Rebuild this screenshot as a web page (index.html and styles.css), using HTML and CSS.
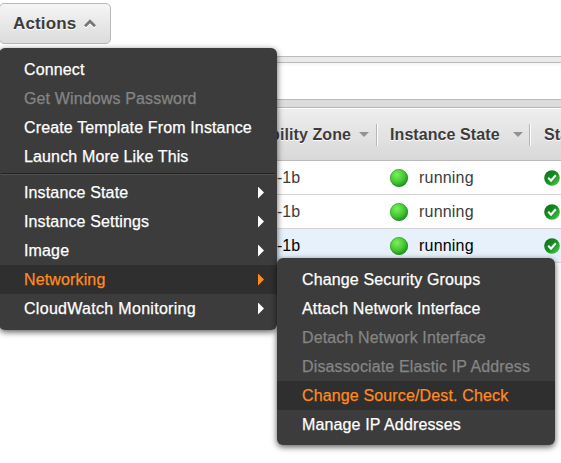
FILE: index.html
```html
<!DOCTYPE html>
<html lang="en">
<head>
<meta charset="utf-8">
<title>Instances</title>
<link rel="stylesheet" href="styles.css">
</head>
<body>
<svg class="defs" aria-hidden="true">
  <defs>
    <radialGradient id="green" cx="38%" cy="32%" r="70%">
      <stop offset="0" stop-color="#7bf05c"/><stop offset=".6" stop-color="#46c72f"/><stop offset="1" stop-color="#16911f"/>
    </radialGradient>
    <linearGradient id="dark" x1="0" y1="0" x2="1" y2="1">
      <stop offset="0" stop-color="#0b6b14"/><stop offset=".55" stop-color="#189324"/><stop offset="1" stop-color="#58d653"/>
    </linearGradient>
    <g id="dot"><circle cx="9" cy="9" r="9" fill="url(#green)"/><circle cx="9" cy="9" r="8.6" fill="none" stroke="#258d2c" stroke-opacity=".55" stroke-width=".8"/></g>
    <g id="check"><circle cx="8" cy="8" r="7.8" fill="url(#dark)"/><path d="M4.2 7.8 7 10.6 11.8 5.2" fill="none" stroke="#fff" stroke-width="2.1"/></g>
  </defs>
</svg>
<div class="toolbar">
  <button class="actions">Actions
    <svg width="14" height="10" viewBox="0 0 14 10"><path d="M2 8.6 7 3.6l5 5" fill="none" stroke="#fff" stroke-width="2.6"/><path d="M2 7.2 7 2.2l5 5" fill="none" stroke="#777" stroke-width="2.8"/></svg>
  </button>
</div>
<div class="strip"></div>
<div class="filter"></div>
<div class="gutter"></div>
<div class="table">
  <div class="row head">
    <div class="zone"><span>bility Zone</span><i class="sort"></i></div>
    <div class="state"><span>Instance State</span><i class="sort"></i></div>
    <div class="status">Sta</div>
  </div>
  <div class="row"><div class="zone">-1b</div><div class="state"><svg width="18" height="18"><use href="#dot"/></svg><span>running</span></div><div class="status"><svg width="16" height="16"><use href="#check"/></svg></div></div>
  <div class="row"><div class="zone">-1b</div><div class="state"><svg width="18" height="18"><use href="#dot"/></svg><span>running</span></div><div class="status"><svg width="16" height="16"><use href="#check"/></svg></div></div>
  <div class="row selected"><div class="zone">-1b</div><div class="state"><svg width="18" height="18"><use href="#dot"/></svg><span>running</span></div><div class="status"><svg width="16" height="16"><use href="#check"/></svg></div></div>
</div>
<ul class="menu main">
  <li>Connect</li>
  <li class="off">Get Windows Password</li>
  <li>Create Template From Instance</li>
  <li>Launch More Like This</li>
  <li class="sep"></li>
  <li class="more">Instance State</li>
  <li class="more">Instance Settings</li>
  <li class="more">Image</li>
  <li class="more on">Networking</li>
  <li class="more wide">CloudWatch Monitoring</li>
</ul>
<ul class="menu sub">
  <li>Change Security Groups</li>
  <li>Attach Network Interface</li>
  <li class="off">Detach Network Interface</li>
  <li class="off">Disassociate Elastic IP Address</li>
  <li class="on">Change Source/Dest. Check</li>
  <li>Manage IP Addresses</li>
</ul>
</body>
</html>
```
FILE: styles.css
```css
* { box-sizing: border-box; }
body {
  margin: 0;
  height: 463px;
  overflow: hidden;
  position: relative;
  background: #fff;
  color: #3c3c3c;
  font: 16px/20px "Liberation Sans", Arial, sans-serif;
}
.defs { position: absolute; width: 0; height: 0; }
.toolbar { height: 56px; padding-top: 3px; }
.actions {
  display: flex;
  align-items: center;
  gap: 7px;
  width: 112px;
  height: 41px;
  margin-left: -1px;
  padding: 0 0 0 13px;
  border: 1px solid #b9b9b9;
  border-radius: 5px;
  background: linear-gradient(#f5f5f5, #dcdcdc);
  color: #3c3c3c;
  font: bold 17px/20px "Liberation Sans", Arial, sans-serif;
  letter-spacing: .15px;
  text-shadow: 0 1px 0 #fff;
}
.strip { height: 7px; background: #e9e9e9; border: solid #bbb; border-width: 1px 0; }
.filter { height: 36px; background: linear-gradient(#f4f4f4, #fff 4px); }
.gutter { height: 9px; background: #dcdcdc; border: solid #b8b8b8; border-width: 1px 0; }
.row {
  display: grid;
  grid-template-columns: 376px 153px 32px;
  height: 34px;
  align-items: center;
  border-bottom: 1px solid #d4d4d4;
}
.row > div { display: flex; align-items: center; }
.zone { padding-left: 277px; }
.row .state { padding-left: 14px; gap: 11px; letter-spacing: .2px; }
.row .status { padding-left: 15px; }
.selected { background: #e6f1fb; color: #000; }
.head {
  height: 53px;
  border-top: 1px solid #fff;
  border-bottom-color: #bbb;
  background: linear-gradient(#eee, #d8d8d8);
  font-weight: bold;
  text-shadow: 0 1px 0 #fff;
}
.row.head > div { height: 22px; white-space: nowrap; letter-spacing: .08px; }
.head .state, .head .status { border-left: 1px solid #b5b5b5; box-shadow: inset 1px 0 #fff; }
.head .zone { justify-content: flex-end; padding: 0 7px 0 0; gap: 8px; }
.row.head .status { padding-left: 14px; overflow: hidden; }
.row.head .state { justify-content: space-between; padding: 0 6px 0 13px; }
.sort {
  width: 10px;
  height: 5px;
  background: #929292;
  clip-path: polygon(0 0, 100% 0, 50% 100%);
}
.menu {
  position: absolute;
  margin: 0;
  list-style: none;
  white-space: nowrap;
  color: #fff;
  background: #3c3c3c;
  border-radius: 6px;
  box-shadow: 0 2px 6px rgba(0, 0, 0, .65);
  letter-spacing: .14px;
  -webkit-text-stroke: .25px currentColor;
}
.main { top: 48px; left: -1px; width: 278px; height: 282px; padding: 7px 0; }
.sub { top: 258px; left: 277px; width: 278px; height: 187px; padding: 7px 0 6px; }
.menu li { height: 29px; padding: 0 13px 0 25px; line-height: 29px; }
.menu .off { color: #858585; }
.menu .on { color: #ff8b22; background: #2f2f2f; }
.menu .wide { letter-spacing: .3px; }
.menu .sep { height: 1px; margin: 2px 2px 4px; padding: 0; background: #222; box-shadow: 0 1px #505050; }
.more { display: flex; justify-content: space-between; align-items: center; }
.more::after {
  content: "";
  width: 6px;
  height: 12px;
  background: currentColor;
  clip-path: polygon(0 0, 100% 50%, 0 100%);
}
```
